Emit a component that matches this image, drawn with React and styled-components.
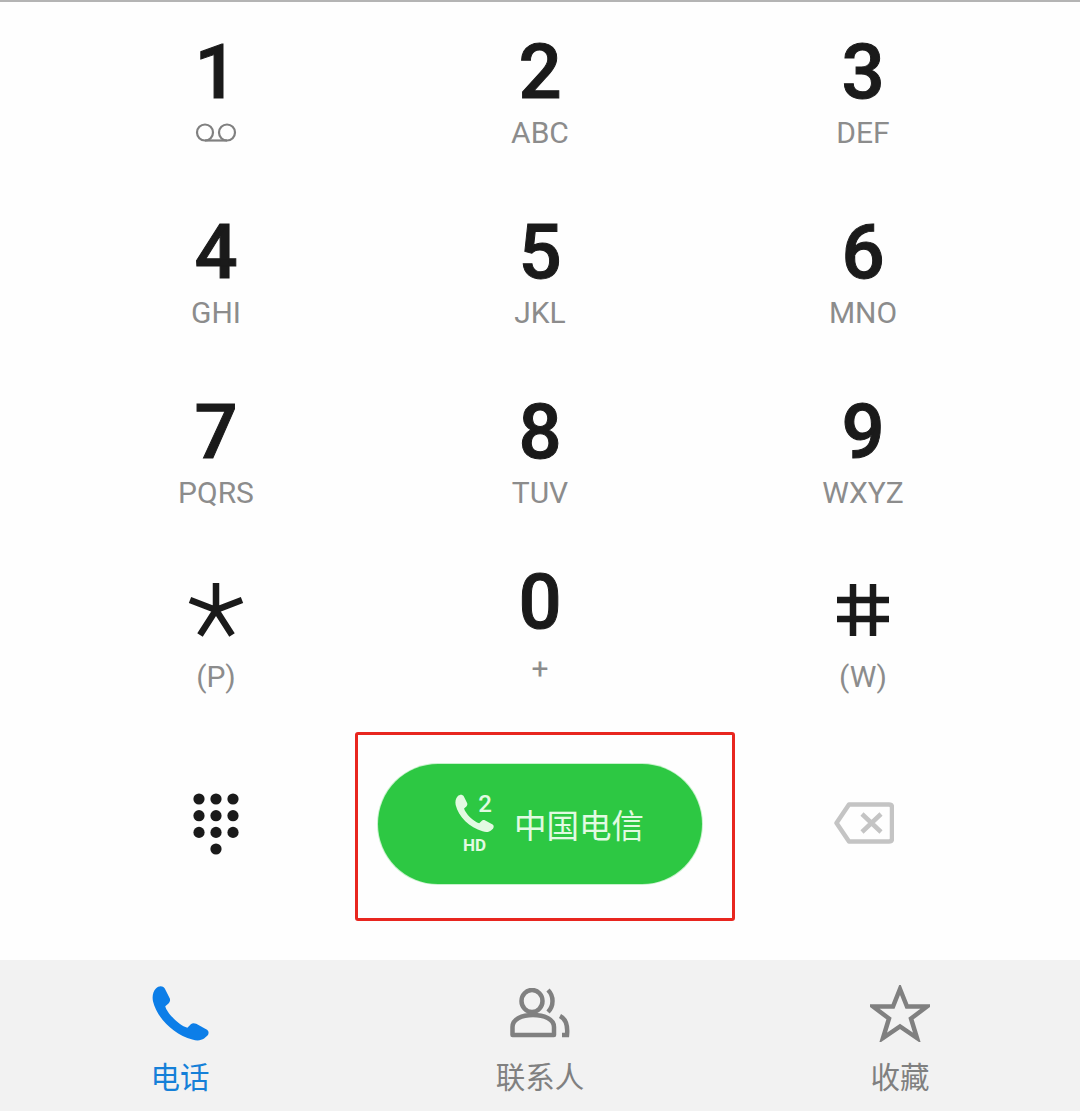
import React from "react";
import styled, { createGlobalStyle } from "styled-components";

const Global = createGlobalStyle`
  html, body { margin: 0; padding: 0; background: #fefefe; }
  * { box-sizing: border-box; }
`;

const Screen = styled.div`
  width: 1080px;
  height: 1111px;
  display: flex;
  flex-direction: column;
  background: #fefefe;
  border-top: 2px solid #b4b4b4;
  font-family: Roboto, "Noto Sans CJK SC", sans-serif;
  overflow: hidden;
`;

const Keypad = styled.div`
  display: grid;
  grid-template-columns: 326px 322px 324px;
  grid-auto-rows: 180px;
  padding-left: 53px;
`;

const Key = styled.div`
  display: flex;
  flex-direction: column;
  align-items: center;
  padding-top: ${(p) => (p.$raised ? 24 : 34)}px;
`;

const Digit = styled.div`
  height: 72px;
  line-height: 72px;
  font-size: 76px;
  font-weight: 500;
  -webkit-text-stroke: 1px #1a1a1a;
  color: #1a1a1a;
`;

const SymbolBox = styled.div`
  height: 72px;
  margin-top: -2px;
  display: flex;
  align-items: center;
  justify-content: center;
  color: #1a1a1a;
`;

const Letters = styled.div`
  height: 36px;
  margin-top: ${(p) => (p.$low ? 13 : 7)}px;
  line-height: 36px;
  font-size: 30px;
  font-weight: 400;
  color: #8c8c8c;
  display: flex;
  align-items: center;
`;

const ActionRow = styled.div`
  margin-top: 10px;
  height: 189px;
  display: grid;
  grid-template-columns: 355px 380px 345px;
`;

const DotsCell = styled.div`
  display: flex;
  align-items: center;
  justify-content: center;
  padding-left: 77px;
  padding-bottom: 6px;
`;

const BackCell = styled.div`
  display: flex;
  align-items: center;
  justify-content: center;
  padding-right: 87px;
  padding-bottom: 7px;
`;

const Highlight = styled.div`
  border: 3px solid #e8261f;
  border-radius: 3px;
  display: flex;
  align-items: center;
  justify-content: center;
  padding: 0 10px 6px 0;
`;

const CallButton = styled.div`
  width: 324px;
  height: 120px;
  border-radius: 60px;
  background: #2dc843;
  box-shadow: 0 0 0 1px #c8f2cc;
  display: flex;
  align-items: center;
  gap: 20px;
  padding-left: 77px;
  color: #e2fae2;
`;

const SimIcon = styled.div`
  position: relative;
  width: 39px;
  height: 60px;
`;

const SimNumber = styled.span`
  position: absolute;
  right: 2px;
  top: -3px;
  font-size: 24px;
  line-height: 26px;
  font-weight: 500;
`;

const HdMark = styled.span`
  position: absolute;
  left: 8px;
  top: 42px;
  font-size: 17px;
  line-height: 18px;
  font-weight: 700;
`;

const Carrier = styled.span`
  font-family: "Noto Sans CJK SC", sans-serif;
  font-size: 32.5px;
  line-height: 40px;
`;

const TabBar = styled.nav`
  margin-top: auto;
  height: 151px;
  background: #f2f2f2;
  display: grid;
  grid-template-columns: repeat(3, 360px);
`;

const Tab = styled.div`
  display: flex;
  flex-direction: column;
  align-items: center;
  padding-top: 25px;
  color: ${(p) => (p.$active ? "#1580d8" : "#808080")};
`;

const TabIcon = styled.div`
  height: 56px;
  display: flex;
  align-items: center;
  justify-content: center;
`;

const TabLabel = styled.div`
  margin-top: 14px;
  font-family: "Noto Sans CJK SC", sans-serif;
  font-size: 29.5px;
  line-height: 40px;
`;

const PHONE =
  "M4 3C7 0 11 0 13 3L18 13C19 15 18 17 16.5 18.5L13.5 21C15 28 28 41 36 43L39.5 39.5C41 38 43 38 45 39L56 45C58 46.5 58 49 56.5 51L53 54C50 56 46 56.5 41 55C22 50 5 33 1 16C0 11 1 6 4 3Z";

const PhoneGlyph = ({ size, color }) => (
  <svg width={size} height={size} viewBox="0 0 58 57" fill={color} style={{ display: "block" }}>
    <path d={PHONE} />
  </svg>
);

const Voicemail = () => (
  <svg width="42" height="20" viewBox="0 0 42 20" fill="none" stroke="#808080" strokeWidth="2.2">
    <circle cx="10" cy="9.5" r="8" />
    <circle cx="32" cy="9.5" r="8" />
    <path d="M10 17.5H32" />
  </svg>
);

const Asterisk = () => (
  <svg width="56" height="54" viewBox="0 0 56 54" fill="none" stroke="currentColor" strokeWidth="6.5">
    <path d="M28 0V27M28 27L2 17M28 27L54 17M28 27L12 52M28 27L44 52" />
  </svg>
);

const Hash = () => (
  <svg width="54" height="54" viewBox="0 0 54 54" fill="none" stroke="currentColor" strokeWidth="6.5">
    <path d="M17 1V53M37 1V53M1 17H53M1 36H53" />
  </svg>
);

const Dots = () => (
  <svg width="46" height="62" viewBox="0 0 46 62" fill="#1a1a1a">
    {[6, 22.7, 39.4].flatMap((y) =>
      [6, 23, 40].map((x) => <circle key={`${x}-${y}`} cx={x} cy={y} r="5.6" />)
    )}
    <circle cx="23" cy="56" r="5.6" />
  </svg>
);

const Backspace = () => (
  <svg width="60" height="42" viewBox="0 0 60 42" fill="none" stroke="#c4c4c4" strokeWidth="4.5">
    <path d="M15 2.5H55Q58 2.5 58 5.5V36.5Q58 39.5 55 39.5H15L2.5 21Z" strokeLinejoin="round" />
    <path d="M28 12L47 30M47 12L28 30" />
  </svg>
);

const Contacts = () => (
  <svg width="60" height="50" viewBox="0 0 60 50" fill="none" stroke="currentColor" strokeWidth="4.5">
    <ellipse cx="22" cy="13" rx="10.5" ry="11" />
    <path d="M38 2C44 8 44 18 38 24" />
    <path d="M2.5 47V39C2.5 31 12 27 23 27C34 27 44 31 44 39V47Z" strokeLinejoin="round" />
    <path d="M50 28C56 31 58 37 57 47H52" />
  </svg>
);

const Star = () => (
  <svg width="60" height="57" viewBox="0 0 60 57" fill="none" stroke="currentColor" strokeWidth="4.5" strokeLinejoin="miter">
    <path d="M30 4L37 21.5H57L41 33.5L47 53L30 41.5L13 53L19 33.5L3 21.5H23Z" />
  </svg>
);

const rows = [
  { d: "1", icon: <Voicemail /> },
  { d: "2", l: "ABC" },
  { d: "3", l: "DEF" },
  { d: "4", l: "GHI" },
  { d: "5", l: "JKL" },
  { d: "6", l: "MNO" },
  { d: "7", l: "PQRS" },
  { d: "8", l: "TUV" },
  { d: "9", l: "WXYZ" },
];

export default function App() {
  return (
    <Screen>
      <Global />
      <Keypad>
        {rows.map((k) => (
          <Key key={k.d}>
            <Digit>{k.d}</Digit>
            <Letters>{k.icon || k.l}</Letters>
          </Key>
        ))}
        <Key>
          <SymbolBox aria-label="*">
            <Asterisk />
          </SymbolBox>
          <Letters $low>(P)</Letters>
        </Key>
        <Key $raised>
          <Digit>0</Digit>
          <Letters $low>+</Letters>
        </Key>
        <Key>
          <SymbolBox aria-label="#">
            <Hash />
          </SymbolBox>
          <Letters $low>(W)</Letters>
        </Key>
      </Keypad>
      <ActionRow>
        <DotsCell>
          <Dots />
        </DotsCell>
        <Highlight>
          <CallButton>
            <SimIcon>
              <PhoneGlyph size={39} color="#e2fae2" />
              <SimNumber>2</SimNumber>
              <HdMark>HD</HdMark>
            </SimIcon>
            <Carrier>中国电信</Carrier>
          </CallButton>
        </Highlight>
        <BackCell>
          <Backspace />
        </BackCell>
      </ActionRow>
      <TabBar>
        <Tab $active>
          <TabIcon>
            <PhoneGlyph size={57} color="#0c7ee8" />
          </TabIcon>
          <TabLabel>电话</TabLabel>
        </Tab>
        <Tab>
          <TabIcon>
            <Contacts />
          </TabIcon>
          <TabLabel>联系人</TabLabel>
        </Tab>
        <Tab>
          <TabIcon>
            <Star />
          </TabIcon>
          <TabLabel>收藏</TabLabel>
        </Tab>
      </TabBar>
    </Screen>
  );
}
